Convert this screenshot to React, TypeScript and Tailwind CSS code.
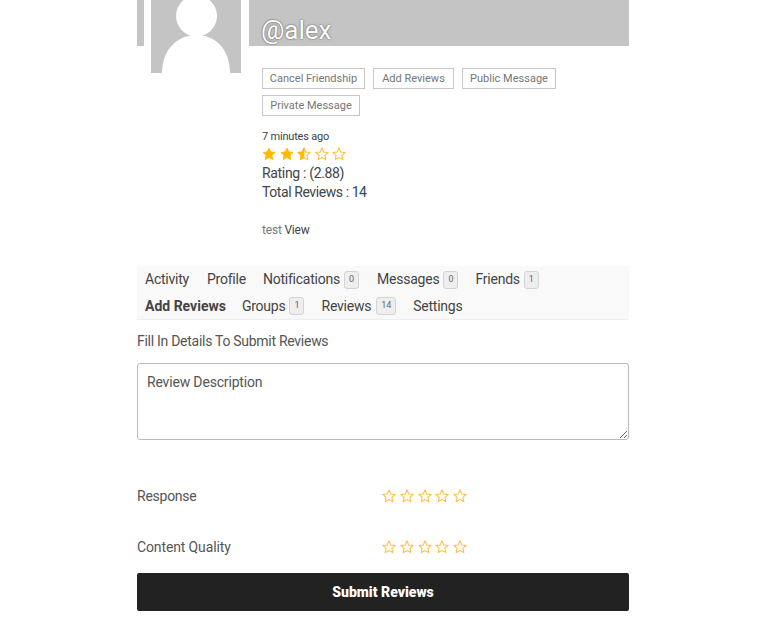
function Star({ kind = "empty", size = 14 }: { kind?: "full" | "half" | "empty"; size?: number }) {
  const d = "M12 1.8l3.1 6.6 7.2.9-5.3 5 1.4 7.2L12 18l-6.4 3.5L7 14.3l-5.3-5 7.2-.9z"
  return (
    <svg width={size} height={size} viewBox="0 0 24 24" className="shrink-0">
      {kind === "full" && <path d={d} fill="#ffb900" stroke="#ffb900" strokeWidth="1.5" />}
      {kind === "empty" && <path d={d} fill="none" stroke="#ffbf3f" strokeWidth="1.8" />}
      {kind === "half" && (
        <>
          <path d={d} fill="none" stroke="#ffbf3f" strokeWidth="1.8" />
          <path d="M12 1.8v16.2l-6.4 3.5L7 14.3l-5.3-5 7.2-.9z" fill="#ffb900" stroke="#ffb900" strokeWidth="1.5" />
        </>
      )}
    </svg>
  )
}

function Stars({ kinds, gap }: { kinds: ("full" | "half" | "empty")[]; gap: string }) {
  return (
    <div className={`flex items-center ${gap}`}>
      {kinds.map((k, i) => (
        <Star key={i} kind={k} />
      ))}
    </div>
  )
}

const empty: ("full" | "half" | "empty")[] = ["empty", "empty", "empty", "empty", "empty"]

function ActionButton({ label, width }: { label: string; width: string }) {
  return (
    <a className={`flex h-[21px] items-center justify-center border border-[#c6c6c6] pt-[1px] text-[11px] text-[#767676] ${width}`}>
      {label}
    </a>
  )
}

function Count({ n, width = "w-[15px]", ml = "ml-[4px]" }: { n: number; width?: string; ml?: string }) {
  return (
    <span className={`flex h-[18px] items-center justify-center rounded-[3px] border border-[#d4d4d4] bg-[#eeeeee] text-[9px] tracking-normal text-[#666] ${width} ${ml}`}>
      {n}
    </span>
  )
}

function NavItem({ label, n, ml, bold, wide }: { label: string; n?: number; ml: string; bold?: boolean; wide?: boolean }) {
  return (
    <span className={`flex items-center text-[14px] ${ml} ${bold ? "font-bold text-[#444]" : "tracking-[-0.23px] text-[#444]"}`}>
      {label}
      {n !== undefined && <Count n={n} width={wide ? "w-[20px]" : "w-[15px]"} ml={wide ? "ml-[5px]" : "ml-[4px]"} />}
    </span>
  )
}

function RatingRow({ label, mt, tracking }: { label: string; mt: string; tracking: string }) {
  return (
    <div className={`flex h-[20px] items-center ${mt}`}>
      <span className={`w-[245px] text-[14px] text-[#555] ${tracking}`}>{label}</span>
      <Stars kinds={empty} gap="gap-[3.75px]" />
    </div>
  )
}

export default function App() {
  return (
    <div className="h-[633px] w-[765px] overflow-hidden bg-white font-['Roboto',sans-serif]">
      <div className="ml-[137px] w-[492px]">
        <div className="flex">
          <div className="h-[46px] w-[7px] bg-[#c4c4c4]" />
          <div className="ml-[7px] h-[73px] w-[90px] bg-[#c4c4c4]">
            <svg width="90" height="73" viewBox="0 0 90 73">
              <circle cx="45.5" cy="16" r="20.5" fill="#fff" />
              <path d="M11 73C11 50 26 35 45.5 35S79 50 79 73z" fill="#fff" />
            </svg>
          </div>
          <div className="ml-[8px] flex-1">
            <div className="flex h-[46px] items-end bg-[#c4c4c4] pl-[12px]">
              <span className="text-[26px] leading-[32px] text-white [text-shadow:0_0_2px_rgba(0,0,0,0.7)]">@alex</span>
            </div>
            <div className="pl-[13px]">
              <div className="mt-[22px] flex flex-wrap gap-x-[8px] gap-y-[6px]">
                <ActionButton label="Cancel Friendship" width="w-[103px]" />
                <ActionButton label="Add Reviews" width="w-[81px]" />
                <ActionButton label="Public Message" width="w-[94px]" />
                <ActionButton label="Private Message" width="w-[98px]" />
              </div>
              <div className="mt-[14px] text-[11px] leading-[14px] tracking-[-0.2px] text-[#444]">7 minutes ago</div>
              <div className="mt-[3px]">
                <Stars kinds={["full", "full", "half", "empty", "empty"]} gap="gap-[3.6px]" />
              </div>
              <div className="mt-[3px] text-[14px] leading-[19px] tracking-[-0.33px] text-[#444]">Rating : (2.88)</div>
              <div className="text-[14px] leading-[19px] tracking-[-0.42px] text-[#444]">
                Total Reviews : <span className="text-[#2a4a6a]">14</span>
              </div>
              <div className="mt-[21px] text-[12px] leading-[14px] tracking-[-0.2px] text-[#777]">
                test <span className="text-[#444]">View</span>
              </div>
            </div>
          </div>
        </div>

        <div className="mt-[29px] border-b border-[#eeeeee] bg-[#f9f9f9]">
          <div className="flex h-[27px] items-center pl-[8px]">
            <NavItem label="Activity" ml="" />
            <NavItem label="Profile" ml="ml-[18px]" />
            <NavItem label="Notifications" n={0} ml="ml-[17px]" />
            <NavItem label="Messages" n={0} ml="ml-[18px]" />
            <NavItem label="Friends" n={1} ml="ml-[17px]" />
          </div>
          <div className="flex h-[26px] items-center pl-[8px]">
            <NavItem label="Add Reviews" ml="" bold />
            <NavItem label="Groups" n={1} ml="ml-[16px]" />
            <NavItem label="Reviews" n={14} ml="ml-[17px]" wide />
            <NavItem label="Settings" ml="ml-[17px]" />
          </div>
        </div>

        <div className="mt-[12px] text-[14px] leading-[19px] tracking-[-0.28px] text-[#555]">Fill In Details To Submit Reviews</div>

        <textarea
          readOnly
          defaultValue="Review Description"
          className="mt-[12px] block h-[77px] w-full rounded-[3px] border border-[#bbbbbb] px-[9px] py-[9px] text-[14px] leading-[19px] tracking-[-0.17px] text-[#555]"
        />

        <RatingRow label="Response" mt="mt-[46px]" tracking="tracking-[-0.25px]" />
        <RatingRow label="Content Quality" mt="mt-[31px]" tracking="tracking-[-0.13px]" />

        <button className="mt-[16px] flex h-[38px] w-full items-center justify-center rounded-[2px] bg-[#222222] text-[14px] font-black text-white">
          Submit Reviews
        </button>
      </div>
    </div>
  )
}
